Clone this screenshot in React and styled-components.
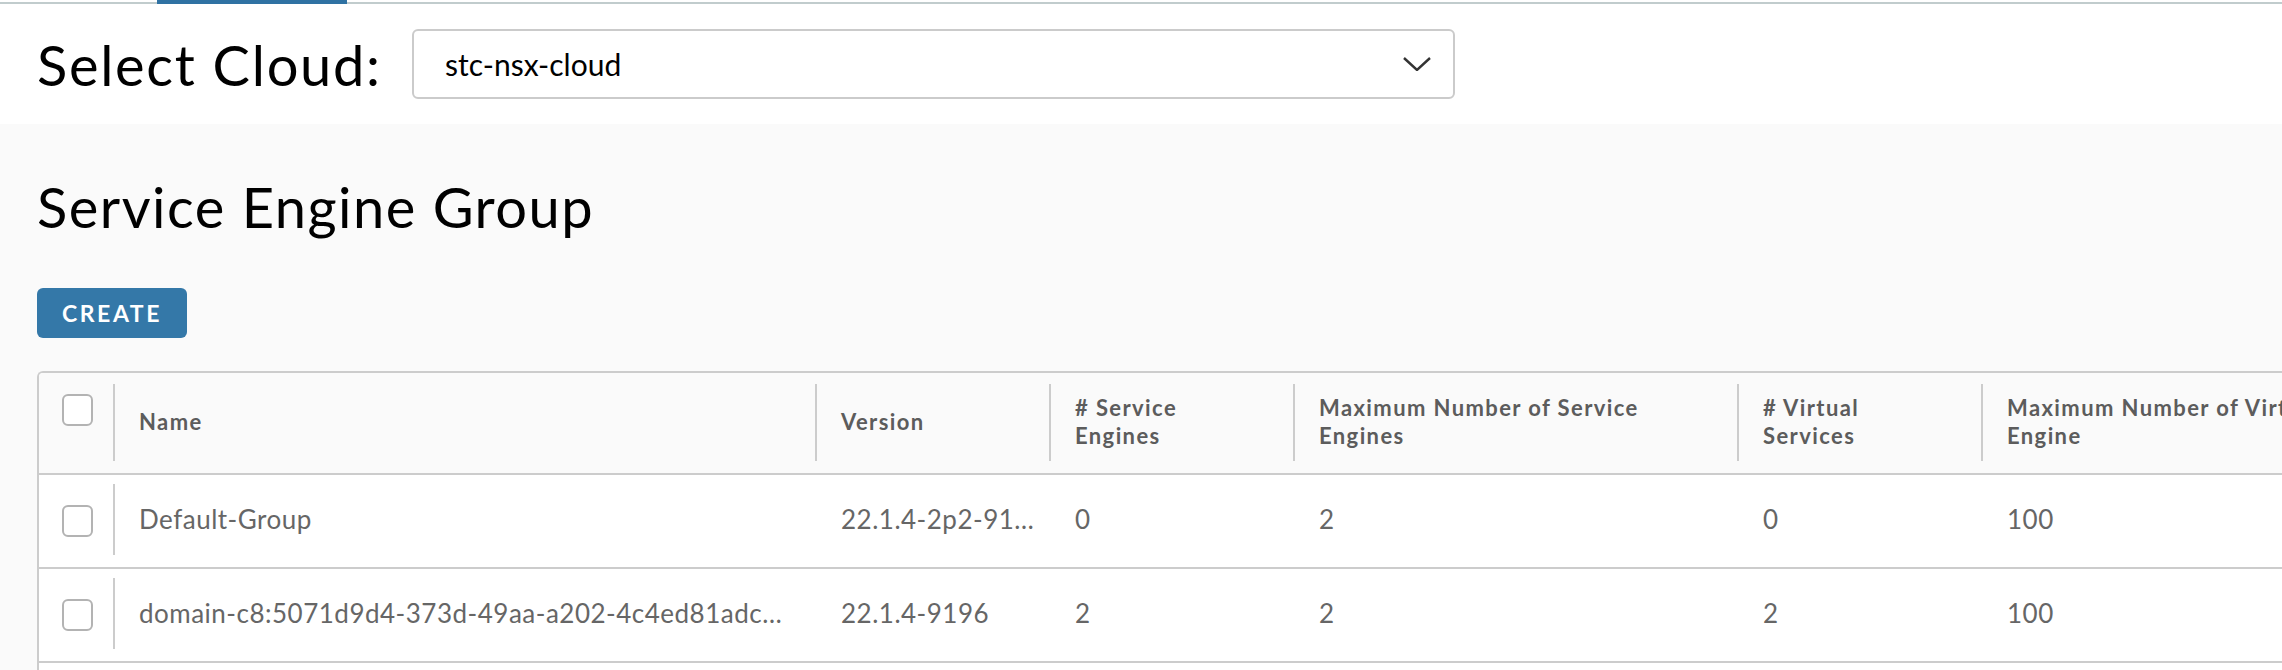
import styled, { createGlobalStyle } from 'styled-components';

const GlobalStyle = createGlobalStyle`
    html, body {
        margin: 0;
        padding: 0;
        background: #fafafa;
        overflow: hidden;
    }
    body {
        font-family: Lato, "Liberation Sans", sans-serif;
        color: #000;
    }
`;

const columns = [
    { key: 'name', label: 'Name' },
    { key: 'version', label: 'Version' },
    { key: 'se', label: ['# Service', 'Engines'] },
    { key: 'maxSe', label: ['Maximum Number of Service', 'Engines'] },
    { key: 'vs', label: ['# Virtual', 'Services'] },
    { key: 'maxVs', label: ['Maximum Number of Virtual Services per Service', 'Engine'] },
];

const rows = [
    { name: 'Default-Group', version: '22.1.4-2p2-91…', se: '0', maxSe: '2', vs: '0', maxVs: '100' },
    { name: 'domain-c8:5071d9d4-373d-49aa-a202-4c4ed81adc…', version: '22.1.4-9196', se: '2', maxSe: '2', vs: '2', maxVs: '100' },
    { name: '', version: '', se: '', maxSe: '', vs: '', maxVs: '' },
];

function ChevronDown() {
    return (
        <svg width="28" height="14" viewBox="0 0 28 14" fill="none">
            <polyline points="1,1 14,13 27,1" stroke="#333" strokeWidth="2.4" strokeLinejoin="miter" />
        </svg>
    );
}

export default function App() {
    return (
        <Page>
            <GlobalStyle />
            <TabStrip>
                <TabLine $width="157px" />
                <ActiveTab />
                <TabLine $grow />
            </TabStrip>
            <CloudBar>
                <CloudLabel>Select Cloud:</CloudLabel>
                <CloudSelect>
                    <span>stc-nsx-cloud</span>
                    <ChevronDown />
                </CloudSelect>
            </CloudBar>
            <Content>
                <Title>Service Engine Group</Title>
                <CreateButton>CREATE</CreateButton>
                <Grid>
                    <HeaderRow>
                        <CheckCell $header>
                            <Checkbox />
                        </CheckCell>
                        {columns.map((c) => (
                            <HeadCell key={c.key}>
                                {Array.isArray(c.label) ? (
                                    <span>
                                        {c.label[0]}
                                        <br />
                                        {c.label[1]}
                                    </span>
                                ) : (
                                    <span>{c.label}</span>
                                )}
                            </HeadCell>
                        ))}
                    </HeaderRow>
                    {rows.map((r, i) => (
                        <BodyRow key={i}>
                            <CheckCell>
                                {r.name && <Checkbox />}
                            </CheckCell>
                            {columns.map((c) => (
                                <Cell key={c.key}>{r[c.key]}</Cell>
                            ))}
                        </BodyRow>
                    ))}
                </Grid>
            </Content>
        </Page>
    );
}

const Page = styled.div`
    width: 2282px;
    height: 670px;
    overflow: hidden;
    background: #fafafa;
`;

const TabStrip = styled.div`
    display: flex;
    align-items: flex-end;
    height: 4px;
    background: #fff;
`;

const TabLine = styled.div`
    height: 2px;
    width: ${(p) => p.$width || 'auto'};
    flex: ${(p) => (p.$grow ? 1 : 'none')};
    background: #c1cccd;
`;

const ActiveTab = styled.div`
    width: 190px;
    height: 4px;
    align-self: flex-start;
    background: #2f72a3;
`;

const CloudBar = styled.div`
    display: flex;
    align-items: center;
    height: 120px;
    padding-left: 37px;
    background: #fff;
`;

const CloudLabel = styled.div`
    width: 375px;
    font-size: 56px;
    font-weight: 400;
    letter-spacing: 1.7px;
    color: #000;
`;

const CloudSelect = styled.div`
    box-sizing: border-box;
    display: flex;
    align-items: center;
    justify-content: space-between;
    width: 1043px;
    height: 70px;
    padding: 0 22px 0 31px;
    border: 2px solid #cbcbcb;
    border-radius: 6px;
    background: #fff;
    font-size: 30px;
    color: #000;
`;

const Content = styled.div`
    display: flex;
    flex-direction: column;
    align-items: flex-start;
    padding-left: 37px;
`;

const Title = styled.h1`
    margin: 50px 0 0;
    font-size: 56px;
    line-height: 66px;
    font-weight: 400;
    letter-spacing: 1.5px;
    color: #000;
`;

const CreateButton = styled.button`
    margin-top: 48px;
    width: 150px;
    height: 50px;
    border: none;
    border-radius: 6px;
    background: #3478a8;
    color: #fff;
    font-family: Lato, "Liberation Sans", sans-serif;
    font-size: 23px;
    font-weight: 700;
    letter-spacing: 2.6px;
    padding: 0;
`;

const Grid = styled.div`
    margin-top: 33px;
    border: 2px solid #cccccc;
    border-right: none;
    border-radius: 6px 0 0 0;
    overflow: hidden;
    background: #fff;
`;

const Row = styled.div`
    display: grid;
    grid-template-columns: 74px 702px 234px 244px 444px 244px 600px;
`;

const HeaderRow = styled(Row)`
    height: 100px;
    background: #fafafa;
    border-bottom: 2px solid #cccccc;
`;

const BodyRow = styled(Row)`
    height: 92px;
    background: #fff;
    border-bottom: 2px solid #cccccc;
`;

const CheckCell = styled.div`
    display: flex;
    align-items: ${(p) => (p.$header ? 'flex-start' : 'center')};
    padding: ${(p) => (p.$header ? '21px 0 0 23px' : '0 0 0 23px')};
`;

const Checkbox = styled.div`
    box-sizing: border-box;
    width: 31px;
    height: 32px;
    border: 2px solid #b3b3b3;
    border-radius: 6px;
    background: #fff;
`;

const HeadCell = styled.div`
    position: relative;
    display: flex;
    align-items: center;
    padding: 0 0 3px 26px;
    font-size: 22px;
    line-height: 28px;
    font-weight: 700;
    letter-spacing: 1.4px;
    color: #5c5c5c;
    white-space: nowrap;
    overflow: hidden;

    &::before {
        content: '';
        position: absolute;
        left: 0;
        top: 11px;
        bottom: 12px;
        width: 2px;
        background: #cccccc;
    }
`;

const Cell = styled.div`
    position: relative;
    display: flex;
    align-items: center;
    padding: 0 0 5px 26px;
    font-size: 26px;
    font-weight: 400;
    letter-spacing: 0.5px;
    color: #666;
    white-space: nowrap;
    overflow: hidden;

    &:nth-child(2)::before {
        content: '';
        position: absolute;
        left: 0;
        top: 9px;
        bottom: 12px;
        width: 2px;
        background: #cccccc;
    }
`;
